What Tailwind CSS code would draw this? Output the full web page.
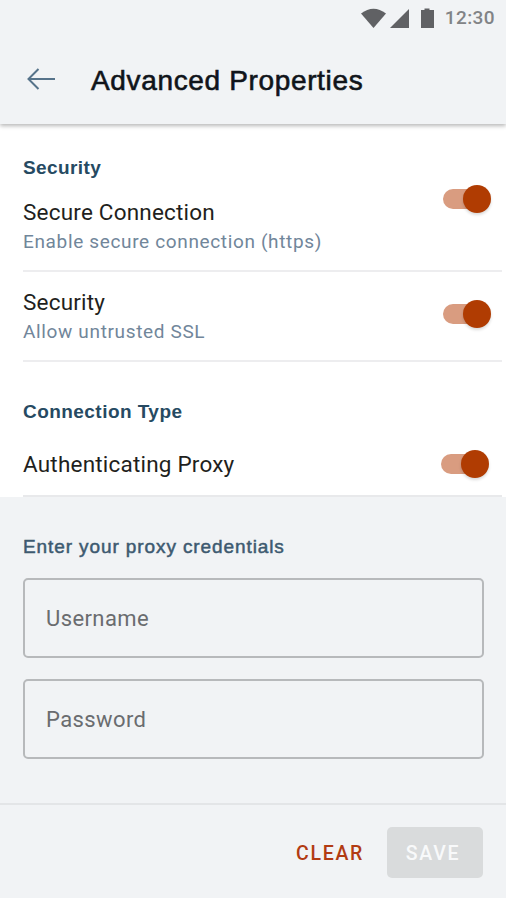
<!DOCTYPE html>
<html lang="en">
<head>
<meta charset="utf-8">
<title>Advanced Properties</title>
<script src="https://cdn.jsdelivr.net/npm/@tailwindcss/browser@4"></script>
</head>
<body class="bg-white">
<div class="w-[506px] h-[900px] overflow-hidden flex flex-col bg-white font-['Roboto',sans-serif] whitespace-nowrap">
  <header class="h-[124px] shrink-0 bg-[#f1f3f5] shadow-[0_2px_4px_rgba(0,0,0,0.28)] relative">
    <div class="h-[36px] flex items-center justify-end pr-[11px]">
      <svg class="w-[78px] h-[24px] mr-[7px]" viewBox="361 5 78 24" fill="#606164"><path d="M362 12.500Q374.500 3 387 12.500L374.500 27Z"/><path d="M410 8V27H391Z"/><path d="M422 9h3.500V7.500h5V9H435v18h-13z"/></svg>
      <span class="text-[19px] leading-[36px] tracking-[0.4px] font-medium text-[#818386]">12:30</span>
    </div>
    <div class="h-[88px] flex items-start pl-[27px]">
      <svg class="w-[28px] h-[24px] mt-[31px]" viewBox="0 0 28 24" fill="none" stroke="#56738a" stroke-width="2"><path d="M28 12H2M11.500 2L1.500 12L11.500 22"/></svg>
      <h1 class="ml-[36px] mt-[25px] text-[28px] leading-[40px] tracking-[0.65px] font-['Liberation_Sans',sans-serif] text-[#10141a] [-webkit-text-stroke:0.6px_#10141a]">Advanced Properties</h1>
    </div>
  </header>
  <main class="flex-1 flex flex-col">
    <section class="h-[373px] pl-[23px] pr-[4px]">
      <div class="h-[148px] border-b-2 border-[#ededef] flex justify-between">
        <div class="pt-[32px]">
          <h2 class="text-[19px] leading-[24px] tracking-[0.4px] font-bold font-['Liberation_Sans',sans-serif] text-[#264a62]">Security</h2>
          <div class="mt-[19px] text-[22.5px] leading-[26px] tracking-[0.2px] text-[#1f1f20]">Secure Connection</div>
          <div class="mt-[5px] text-[19px] leading-[24px] tracking-[0.65px] text-[#71869a]">Enable secure connection (https)</div>
        </div>
        <div class="mt-[61px] mr-[11px] w-[48px] h-[28px] flex items-center justify-end relative"><span class="absolute left-0 top-[4px] w-[40px] h-[20px] rounded-full bg-[#d99c80]"></span><span class="relative size-[28px] rounded-full bg-[#b03c02] shadow-[0_2px_3px_rgba(0,0,0,0.15)]"></span></div>
      </div>
      <div class="h-[90px] border-b-2 border-[#ededef] flex justify-between">
        <div class="pt-[17px]">
          <div class="text-[22.5px] leading-[26px] tracking-[0.2px] text-[#1f1f20]">Security</div>
          <div class="mt-[5px] text-[19px] leading-[24px] tracking-[0.65px] text-[#71869a]">Allow untrusted SSL</div>
        </div>
        <div class="mt-[28px] mr-[11px] w-[48px] h-[28px] flex items-center justify-end relative"><span class="absolute left-0 top-[4px] w-[40px] h-[20px] rounded-full bg-[#d99c80]"></span><span class="relative size-[28px] rounded-full bg-[#b03c02] shadow-[0_2px_3px_rgba(0,0,0,0.15)]"></span></div>
      </div>
      <div class="h-[135px] border-b-2 border-[#e8e9eb] flex justify-between">
        <div class="pt-[38px]">
          <h2 class="text-[19px] leading-[24px] tracking-[0.45px] font-bold font-['Liberation_Sans',sans-serif] text-[#264a62]">Connection Type</h2>
          <div class="mt-[27px] text-[22.5px] leading-[26px] tracking-[0.2px] text-[#1f1f20]">Authenticating Proxy</div>
        </div>
        <div class="mt-[88px] mr-[13px] w-[48px] h-[28px] flex items-center justify-end relative"><span class="absolute left-0 top-[4px] w-[40px] h-[20px] rounded-full bg-[#d99c80]"></span><span class="relative size-[28px] rounded-full bg-[#b03c02] shadow-[0_2px_3px_rgba(0,0,0,0.15)]"></span></div>
      </div>
    </section>
    <section class="h-[306px] bg-[#f1f3f5] pl-[23px] pr-[22px] pt-[38px]">
      <h2 class="text-[19px] leading-[24px] tracking-[0.9px] font-['Liberation_Sans',sans-serif] text-[#3d5a70] [-webkit-text-stroke:0.5px_#3d5a70]">Enter your proxy credentials</h2>
      <div class="mt-[19px] h-[80px] rounded-[5px] border-2 border-[#b7b9bb] flex items-center pl-[21px] text-[22px] tracking-[0.4px] text-[#6a6c6f]">Username</div>
      <div class="mt-[21px] h-[80px] rounded-[5px] border-2 border-[#b7b9bb] flex items-center pl-[21px] text-[22px] tracking-[0.4px] text-[#6a6c6f]">Password</div>
    </section>
    <footer class="h-[95px] bg-[#f1f3f5] border-t-2 border-[#e3e5e7] flex justify-end pr-[23px] pt-[22px]">
      <button class="h-[51px] pt-[2px] mr-[23px] text-[19.5px] tracking-[1.7px] font-medium text-[#b23b12]">CLEAR</button>
      <button class="w-[96px] h-[51px] pt-[2px] rounded-[5px] bg-[#d9dbdc] text-[19.5px] tracking-[1.7px] font-medium text-[#f8f9fa] pr-[4px]">SAVE</button>
    </footer>
  </main>
</div>
</body>
</html>
